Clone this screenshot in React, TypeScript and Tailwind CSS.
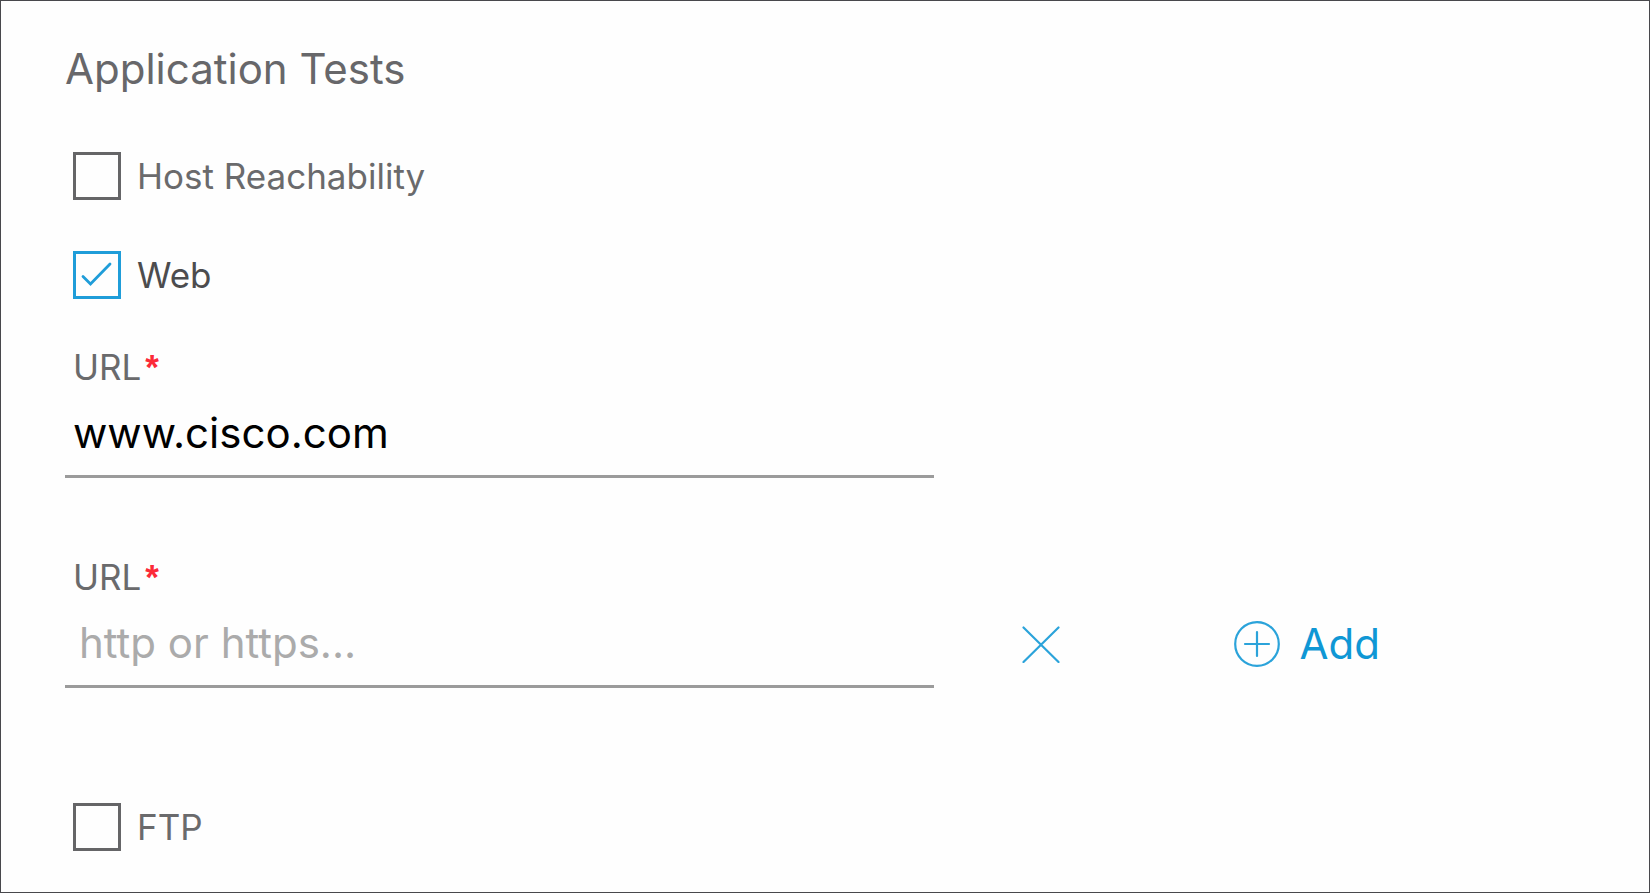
import React, { useState } from "react";

interface ICheckFieldProps {
  id: string;
  label: string;
  checked: boolean;
  onChange: (checked: boolean) => void;
}

const CheckField = ({ id, label, checked, onChange }: ICheckFieldProps) => (
  <div className="flex items-center gap-4 pl-2">
    <span className="grid size-12 shrink-0">
      <input
        id={id}
        type="checkbox"
        checked={checked}
        onChange={(e) => onChange(e.target.checked)}
        className="col-start-1 row-start-1 size-12 appearance-none border-3 border-[#656567] checked:border-[#1f9dd9]"
      />
      {checked && (
        <svg
          viewBox="0 0 48 48"
          className="pointer-events-none col-start-1 row-start-1 size-12"
          fill="none"
          stroke="#1f9dd9"
          strokeWidth="2.8"
          strokeLinecap="round"
        >
          <path d="M10 25.5L17.5 33L37 13" />
        </svg>
      )}
    </span>
    <label
      htmlFor={id}
      className={
        checked
          ? "text-[35px] leading-10 text-[#4c4c4e]"
          : "text-[35px] leading-10 text-[#6a6a6c]"
      }
    >
      {label}
    </label>
  </div>
);

interface IUrlFieldProps {
  id: string;
  value: string;
  onChange: (value: string) => void;
  children?: React.ReactNode;
}

const UrlField = ({ id, value, onChange, children }: IUrlFieldProps) => (
  <div>
    <label
      htmlFor={id}
      className="flex pl-2 text-[35px] leading-10 text-[#6a6a6c]"
    >
      URL
      <span className="ml-1 font-['Liberation_Sans',sans-serif] font-bold text-[#fc2a38]">
        *
      </span>
    </label>
    <div className="grid grid-cols-[4fr_3fr] items-center">
      <input
        id={id}
        type="text"
        required
        value={value}
        placeholder="http or https..."
        onChange={(e) => onChange(e.target.value)}
        className="h-[91px] w-full border-b-3 border-[#9b9b9b] pt-0.5 pl-2 text-[42px] text-black outline-none placeholder:text-[#ababab] placeholder-shown:pl-3.5"
      />
      {children}
    </div>
  </div>
);

const App = () => {
  const [tests, setTests] = useState({ host: false, web: true, ftp: false });
  const [urls, setUrls] = useState<string[]>(["www.cisco.com", ""]);

  const updateUrl = (index: number, value: string) =>
    setUrls(urls.map((url, i) => (i === index ? value : url)));

  return (
    <main className="min-h-screen border border-[#48484c] bg-[#fefefe] px-16 pt-11 pb-10 font-['Inter',sans-serif]">
      <h1 className="text-[42px] leading-12 text-[#67676a]">
        Application Tests
      </h1>
      <div className="mt-[59px] flex flex-col gap-[51px]">
        <CheckField
          id="host"
          label="Host Reachability"
          checked={tests.host}
          onChange={(host) => setTests({ ...tests, host })}
        />
        <CheckField
          id="web"
          label="Web"
          checked={tests.web}
          onChange={(web) => setTests({ ...tests, web })}
        />
      </div>
      <div className="mt-12 flex flex-col gap-[79px]">
        {urls.map((url, index) => (
          <UrlField
            key={index}
            id={`url-${index}`}
            value={url}
            onChange={(value) => updateUrl(index, value)}
          >
            {index > 0 && index === urls.length - 1 && (
              <div className="flex items-center gap-[174px] pt-0.5 pl-22">
                <button
                  type="button"
                  aria-label="Remove"
                  onClick={() => setUrls(urls.slice(0, -1))}
                >
                  <svg
                    viewBox="0 0 38 38"
                    className="size-[38px]"
                    fill="none"
                    stroke="#2ba3da"
                    strokeWidth="2.2"
                    strokeLinecap="round"
                  >
                    <path d="M1.5 2.5L36.5 37M36.5 2.5L1.5 37" />
                  </svg>
                </button>
                <button
                  type="button"
                  className="flex items-center gap-5 text-[42px] leading-12 text-[#0f97d5]"
                  onClick={() => setUrls([...urls, ""])}
                >
                  <svg
                    viewBox="0 0 46 46"
                    className="size-[46px]"
                    fill="none"
                    stroke="#2ba3da"
                    strokeWidth="2.2"
                    strokeLinecap="round"
                  >
                    <circle cx="23" cy="23" r="21.8" />
                    <path d="M23 11V35M11 23H35" />
                  </svg>
                  Add
                </button>
              </div>
            )}
          </UrlField>
        ))}
      </div>
      <div className="mt-[115px]">
        <CheckField
          id="ftp"
          label="FTP"
          checked={tests.ftp}
          onChange={(ftp) => setTests({ ...tests, ftp })}
        />
      </div>
    </main>
  );
};

export default App;
